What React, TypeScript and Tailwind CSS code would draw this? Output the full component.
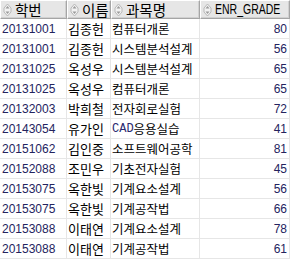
import React from "react";

const rows: [string, string, string, string][] = [
  ["20131001", "김종헌", "컴퓨터개론", "80"],
  ["20131001", "김종헌", "시스템분석설계", "56"],
  ["20131025", "옥성우", "시스템분석설계", "65"],
  ["20131025", "옥성우", "컴퓨터개론", "65"],
  ["20132003", "박희철", "전자회로실험", "72"],
  ["20143054", "유가인", "CAD응용실습", "41"],
  ["20151062", "김인중", "소프트웨어공학", "81"],
  ["20152088", "조민우", "기초전자실험", "45"],
  ["20153075", "옥한빛", "기계요소설계", "56"],
  ["20153075", "옥한빛", "기계공작법", "66"],
  ["20153088", "이태연", "기계요소설계", "78"],
  ["20153088", "이태연", "기계공작법", "61"],
];

function SortIcon() {
  return (
    <svg width="9" height="14" viewBox="0 0 9 14" className="shrink-0">
      <path d="M4.5 1 L8 5 L8 9 L4.5 13 L1 9 L1 5 Z" fill="#f2f2f2" stroke="#b8b8b8" strokeWidth="1" />
      <path d="M4.5 3 L6.5 5.5 L2.5 5.5 Z" fill="#9a9a9a" />
      <path d="M4.5 11 L6.5 8.5 L2.5 8.5 Z" fill="#9a9a9a" />
    </svg>
  );
}

function Head({ label, latin }: { label: string; latin?: boolean }) {
  return (
    <div className="flex h-[19px] items-center gap-[3px] border border-[#a5a5a5] border-t-white border-l-white bg-[#e6e6e6] pl-[2px] text-black shadow-[inset_-1px_-1px_0_#d0d0d0]">
      <SortIcon />
      {latin ? (
        <span
          className="inline-block origin-left scale-x-[0.75] whitespace-nowrap text-[14px] leading-[17px]"
          style={{ fontFamily: '"Liberation Sans", sans-serif' }}
        >
          {label}
        </span>
      ) : (
        <span className="whitespace-nowrap text-[14.5px] leading-[17px]">{label}</span>
      )}
    </div>
  );
}

function Code({ text }: { text: string }) {
  const m = text.match(/^([A-Z]+)(.*)$/);
  if (m) {
    return (
      <>
        <span className="text-[12px] text-[#2a2a70]" style={{ fontFamily: '"Liberation Mono", monospace' }}>
          {m[1]}
        </span>
        {m[2]}
      </>
    );
  }
  return <>{text}</>;
}

export default function App() {
  return (
    <div
      className="h-[265px] w-[293px] overflow-hidden bg-white"
      style={{ fontFamily: '"Noto Sans CJK KR", "Liberation Sans", sans-serif' }}
    >
      <div className="grid w-[290px] grid-cols-[67px_44px_89px_90px]">
        <Head label="학번" />
        <Head label="이름" />
        <Head label="과목명" />
        <Head label="ENR_GRADE" latin />
        {rows.map((r, i) => (
          <React.Fragment key={i}>
            <div
              className="flex h-[20px] items-center border-b border-r border-[#e6e6e6] pl-[2px] text-[12px] text-[#23235e]"
              style={{ fontFamily: '"Liberation Sans", sans-serif' }}
            >
              {r[0]}
            </div>
            <div className="flex h-[20px] items-center whitespace-nowrap border-b border-r border-[#e6e6e6] pl-[1px] text-[13px] leading-[16px] text-black">
              {r[1]}
            </div>
            <div className="flex h-[20px] items-center whitespace-nowrap border-b border-r border-[#e6e6e6] pl-[1px] text-[12.5px] leading-[16px] text-black">
              <Code text={r[2]} />
            </div>
            <div
              className="flex h-[20px] items-center justify-end border-b border-r border-[#e6e6e6] pr-[2px] text-[12px] text-[#23235e]"
              style={{ fontFamily: '"Liberation Sans", sans-serif' }}
            >
              {r[3]}
            </div>
          </React.Fragment>
        ))}
      </div>
    </div>
  );
}
